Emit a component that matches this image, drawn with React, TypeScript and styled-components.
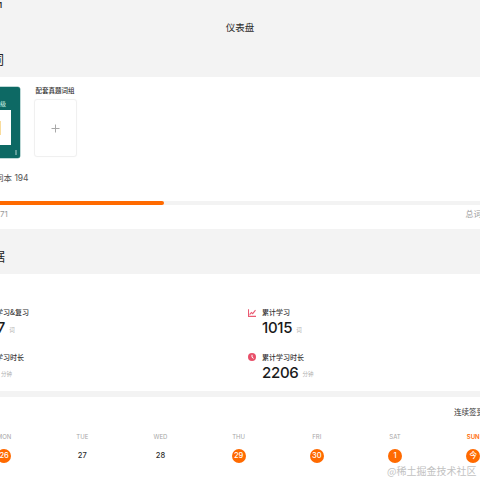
import React from "react";
import styled, { createGlobalStyle } from "styled-components";

const Global = createGlobalStyle`
  html, body { margin: 0; padding: 0; background: #f3f3f3; }
  body { font-family: "Inter", "Noto Sans CJK SC", sans-serif; color: #1c1c1c; }
`;

const Page = styled.div`
  position: relative;
  width: 480px;
  height: 480px;
  overflow: hidden;
  background: #f3f3f3;
  display: flex;
  flex-direction: column;
`;

const Clipped = styled.div`
  height: 50px;
  padding-top: 1px;
  box-sizing: border-box;
  margin-left: -14px;
  font: 600 8px/9px "Inter", "Noto Sans CJK SC", sans-serif;
`;

const Header = styled.div`
  position: relative;
`;

const Title = styled.div`
  position: absolute;
  left: 0;
  right: 0;
  top: 21px;
  text-align: center;
  font: 400 9.5px/13px "Noto Sans CJK SC", sans-serif;
  color: #2b2b2b;
`;

const SectionHead = styled.div<{ $h: number; $pad: number; $shift: number }>`
  height: ${(p) => p.$h}px;
  padding-top: ${(p) => p.$pad}px;
  margin-left: ${(p) => p.$shift}px;
  box-sizing: border-box;
  font: 400 13px/18px "Noto Sans CJK SC", sans-serif;
  color: #222;
`;

const BooksCard = styled.section`
  background: #fff;
  height: 124px;
  box-sizing: border-box;
  padding-top: 10px;
`;

const Books = styled.div`
  display: flex;
  gap: 14px;
  margin-left: -60px;
  align-items: flex-start;
`;

const GreenBook = styled.div`
  width: 79.5px;
  height: 71px;
  border-radius: 2.5px;
  background: #0d6964;
  box-shadow: 0 0 0 0.5px #7fb3b0;
  box-sizing: border-box;
  padding: 12px 8.5px 0 0;
  display: flex;
  flex-direction: column;
  align-items: flex-end;
  position: relative;
`;

const BookLevel = styled.div`
  align-self: flex-end;
  margin-right: 5px;
  font: 500 6px/9px "Noto Sans CJK SC", sans-serif;
  color: #b5e0d6;
`;

const BookCover = styled.div`
  margin-top: 2px;
  width: 60px;
  height: 35px;
  background: #fff;
  display: flex;
  align-items: center;
  justify-content: flex-end;
  padding-right: 10px;
  box-sizing: border-box;
`;

const Sticker = styled.div`
  width: 1.5px;
  height: 14px;
  background: #f9dc9c;
`;

const BookMark = styled.div`
  position: absolute;
  right: 3px;
  bottom: 3px;
  width: 1.5px;
  height: 5px;
  background: #5f9d99;
`;

const BlankCol = styled.div`
  display: flex;
  flex-direction: column;
  margin-top: -1px;
`;

const BlankLabel = styled.div`
  margin-left: 2px;
  font: 500 6.5px/9px "Noto Sans CJK SC", sans-serif;
  color: #2e2e2e;
  white-space: nowrap;
`;

const BlankTile = styled.div`
  margin-top: 4px;
  width: 43px;
  height: 58px;
  box-sizing: border-box;
  border: 1px solid #f0f0f0;
  border-radius: 3px;
  box-shadow: 0 0 1px #f0f0f0;
  display: flex;
  align-items: center;
  justify-content: center;
`;

const Summary = styled.div`
  margin: 14px 0 0 -5px;
  font: 400 8.5px/12px "Inter", "Noto Sans CJK SC", sans-serif;
  color: #555;
`;

const Track = styled.div`
  height: 4px;
  background: #f3f3f3;
`;

const Fill = styled.div`
  height: 4px;
  background: #ff6a00;
  border-radius: 0 2px 2px 0;
`;

const ProgressLabels = styled.div`
  height: 24px;
  background: #fff;
  display: flex;
  justify-content: space-between;
  padding-top: 4px;
  box-sizing: border-box;
  font: 400 8px/11px "Inter", "Noto Sans CJK SC", sans-serif;
  color: #9a9a9a;
`;

const RightClip = styled.span`
  margin-right: -1.5px;
`;

const StatsCard = styled.section`
  background: #fff;
  height: 117px;
  box-sizing: border-box;
  padding-top: 33px;
  margin-bottom: 6px;
`;

const StatsGrid = styled.div`
  display: grid;
  grid-template-columns: 280px 200px;
  grid-auto-rows: 44.5px;
  margin-left: -32px;
`;

const Stat = styled.div`
  display: grid;
  grid-template-columns: 14px auto;
  grid-auto-rows: min-content;
  align-items: center;
  width: max-content;
`;

const StatIcon = styled.div`
  width: 8px;
  height: 8px;
  display: flex;
`;

const StatLabel = styled.div`
  font: 500 7px/11px "Noto Sans CJK SC", sans-serif;
  color: #333;
`;

const StatValue = styled.div`
  grid-column: 2;
  display: flex;
  align-items: center;
  gap: 4px;
  margin-top: 0;
  font: 500 15px/20px "Inter", sans-serif;
  letter-spacing: -0.3px;
  color: #1a1a1a;
`;

const Unit = styled.span`
  margin-top: 3px;
  font: 400 5.5px/8px "Noto Sans CJK SC", sans-serif;
  letter-spacing: 0;
  color: #b0b0b0;
`;

const CalendarCard = styled.section`
  background: #fff;
  flex: 1;
  box-sizing: border-box;
  padding-top: 9px;
`;

const Streak = styled.div`
  margin-left: 454px;
  width: 60px;
  font: 400 7.5px/12px "Noto Sans CJK SC", sans-serif;
  color: #333;
  white-space: nowrap;
`;

const Week = styled.div`
  display: grid;
  grid-template-columns: repeat(7, 78.2px);
  margin: 14px 0 0 -35px;
`;

const Day = styled.div`
  display: flex;
  flex-direction: column;
  align-items: center;
  gap: 8px;
`;

const DayName = styled.div<{ $today?: boolean }>`
  font: ${(p) => (p.$today ? 600 : 400)} 6px/9px "Inter", sans-serif;
  color: ${(p) => (p.$today ? "#ff6a00" : "#a6a6a6")};
`;

const DayNum = styled.div<{ $on?: boolean }>`
  width: 14px;
  height: 14px;
  border-radius: 50%;
  display: flex;
  align-items: center;
  justify-content: center;
  background: ${(p) => (p.$on ? "#ff6a00" : "transparent")};
  color: ${(p) => (p.$on ? "#fff" : "#2e2e2e")};
  font: 500 7.5px/14px "Inter", "Noto Sans CJK SC", sans-serif;
`;

const Watermark = styled.div`
  position: absolute;
  left: 387px;
  top: 464px;
  font: 400 10px/14px "Noto Sans CJK SC", sans-serif;
  color: #c2c2c2;
  white-space: nowrap;
`;

const days = [
  { n: "MON", d: "26", on: true },
  { n: "TUE", d: "27" },
  { n: "WED", d: "28" },
  { n: "THU", d: "29", on: true },
  { n: "FRI", d: "30", on: true },
  { n: "SAT", d: "1", on: true },
  { n: "SUN", d: "今", on: true, today: true },
];

const stats = [
  { label: "今日学习&复习", value: "217", unit: "词", icon: "none" },
  { label: "累计学习", value: "1015", unit: "词", icon: "chart" },
  { label: "今日学习时长", value: "21", unit: "分钟", icon: "none" },
  { label: "累计学习时长", value: "2206", unit: "分钟", icon: "clock" },
];

const Icon = ({ kind }: { kind: string }) =>
  kind === "chart" ? (
    <svg width="8" height="8" viewBox="0 0 8 8" fill="none" stroke="#ea5a72" strokeWidth="1.1">
      <path d="M0.5 0.3V7.4H8" />
      <path d="M1.6 5.6L3.4 3.5L4.7 4.6L7.5 1.2" />
    </svg>
  ) : kind === "clock" ? (
    <svg width="8" height="8" viewBox="0 0 8 8">
      <circle cx="4" cy="4" r="4" fill="#e8506a" />
      <path d="M4 1.8V4.2L5.6 5.4" fill="none" stroke="#fff" strokeWidth="1" />
    </svg>
  ) : null;

export default function App() {
  return (
    <Page>
      <Global />
      <Header>
        <Clipped>9:41</Clipped>
        <Title>仪表盘</Title>
        <SectionHead $h={27} $pad={0} $shift={-22}>单词</SectionHead>
      </Header>
      <BooksCard>
        <Books>
          <GreenBook>
            <BookLevel>六级</BookLevel>
            <BookCover>
              <Sticker />
            </BookCover>
            <BookMark />
          </GreenBook>
          <BlankCol>
            <BlankLabel>配套真题词组</BlankLabel>
            <BlankTile>
              <svg width="9" height="9" viewBox="0 0 9 9" stroke="#a8a8a8" strokeWidth="1">
                <path d="M4.5 0.5V8.5M0.5 4.5H8.5" />
              </svg>
            </BlankTile>
          </BlankCol>
        </Books>
        <Summary>词本 194</Summary>
      </BooksCard>
      <Track>
        <Fill style={{ width: `${(164 / 480) * 100}%` }} />
      </Track>
      <ProgressLabels>
        <span>71</span>
        <RightClip>总词</RightClip>
      </ProgressLabels>
      <SectionHead $h={45} $pad={18} $shift={-21}>数据</SectionHead>
      <StatsCard>
        <StatsGrid>
          {stats.map((s) => (
            <Stat key={s.label}>
              <StatIcon>
                <Icon kind={s.icon} />
              </StatIcon>
              <StatLabel>{s.label}</StatLabel>
              <StatValue>
                <span>{s.value}</span>
                <Unit>{s.unit}</Unit>
              </StatValue>
            </Stat>
          ))}
        </StatsGrid>
      </StatsCard>
      <CalendarCard>
        <Streak>连续签到</Streak>
        <Week>
          {days.map((x) => (
            <Day key={x.n}>
              <DayName $today={x.today}>{x.n}</DayName>
              <DayNum $on={x.on}>{x.d}</DayNum>
            </Day>
          ))}
        </Week>
      </CalendarCard>
      <Watermark>@稀土掘金技术社区</Watermark>
    </Page>
  );
}
